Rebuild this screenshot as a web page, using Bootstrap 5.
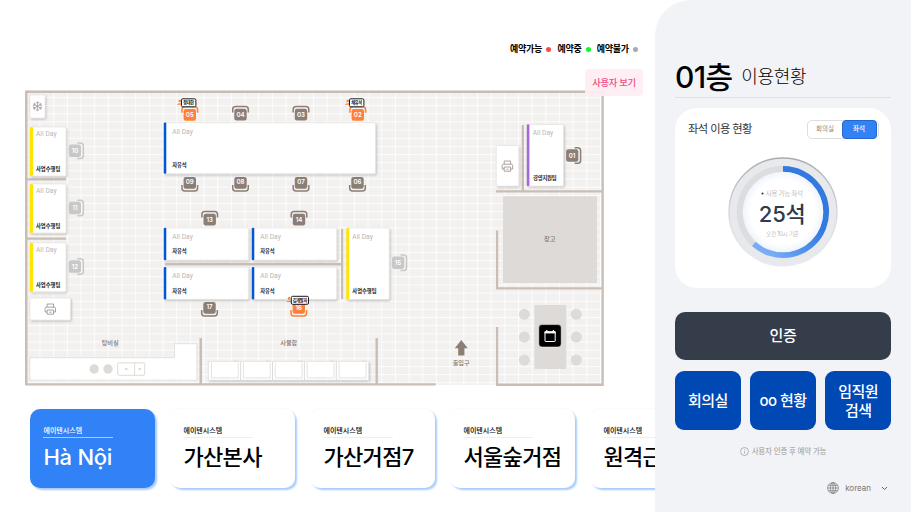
<!DOCTYPE html>
<html lang="ko">
<head>
<meta charset="utf-8">
<meta name="viewport" content="width=device-width, initial-scale=1">
<title>좌석 이용 현황</title>
<link href="https://cdn.jsdelivr.net/npm/bootstrap@5.3.0/dist/css/bootstrap.min.css" rel="stylesheet">
<style>
body{font-family:Inter,"Noto Sans CJK KR",sans-serif;width:911px;height:512px;overflow:hidden;background:#fff;color:#000}
.kiosk{height:512px}
.floor-side{width:655px;padding-top:42px}
.legend{height:14px;font-size:9px;font-weight:700;letter-spacing:-.28px;padding-right:17px;line-height:14px}
.legend-dot{width:5px;height:5px;border-radius:50%;margin:0 6px 0 4.3px}
.legend-dot:last-child{margin-right:0}
.dot-ok{background:#ff4747}.dot-busy{background:#0dfb25}.dot-off{background:#a8a8ae}
.plan-wrap{height:333px}
.user-btn{right:12px;top:13px;width:58px;height:27px;border-radius:4px;background:rgba(255,238,244,.92);color:#ef4c86;font-size:9.3px;font-weight:500;letter-spacing:-.3px;border:0;padding:0}
.branch-strip{padding:20px 0 0 30px;gap:15px;height:123px;overflow:hidden}
.branch{flex:0 0 125px;height:78.5px;border-radius:10px;background:#fff;padding:14.5px 13.4px 0;box-shadow:2px 2px 2px #a9cbff,0 -1px 2px rgba(0,0,0,.025)}
.branch.on{background:#3182f6;color:#fff}
.branch-co{font-size:7px;line-height:13px;letter-spacing:.05px;font-weight:500;white-space:nowrap}
.branch-rule{width:70px;height:1px;background:#eee}
.branch.on .branch-rule{background:#a7cbff}
.branch-name{font-size:22px;line-height:30px;font-weight:500;letter-spacing:-.65px;margin-top:4.5px;white-space:nowrap}
.branch.on .branch-name{letter-spacing:-.25px}
.panel{width:256px;background:#f2f3f6;border-top-left-radius:36px;padding:57px 20px 0}
.floor-head{height:41px;border-bottom:1px solid #dfe0e2;gap:8.5px}
.floor-no{font-size:30px;font-weight:500;letter-spacing:-.6px;line-height:40px}
.floor-sub{font-size:18px;font-weight:300;letter-spacing:-.3px;line-height:40px}
.usage{margin-top:10px;height:180px;border-radius:22px;background:#fff;padding:12px 12.5px 0 13px}
.usage-title{font-size:11.3px;letter-spacing:-.6px;color:#333;line-height:19px}
.switch-box{width:72px;height:19px;border:1px solid #ddd;border-radius:5px;font-size:6.5px;color:#888;line-height:17px;text-align:center}
.switch-box .sel{background:#3182f6;color:#fff;border-radius:4px;margin:-1px;line-height:17px;border:1px solid #2467c9;font-weight:500}
.gauge{display:block;margin:15px 0 0 36.8px;width:116px;height:116px}
.auth{margin-top:24px;height:48px;border-radius:10px;background:#353d4a;color:#fff;font-size:15px;font-weight:500;border:0;padding:0;letter-spacing:-.4px}
.act-row{margin-top:11px;gap:9.5px}
.act{flex:1 1 0;height:59px;border-radius:9px;background:#0049b5;color:#fff;border:0;padding:0;font-size:15px;font-weight:500;line-height:19px;letter-spacing:-.5px}
.hint{margin-top:15px;height:13px;font-size:7.5px;color:#999;letter-spacing:-.2px;gap:3px}
.lang{margin-top:23px;height:14px;font-size:8px;color:#777;gap:6px;padding-right:3px}
.plan text{font-family:Inter,"Noto Sans CJK KR",sans-serif}
.wall{fill:#cabdb5}
.desk{fill:#fff;stroke:#dedbd9;stroke-width:.5;filter:url(#sh)}
.ad{font-size:6.6px;fill:#b6b6b6}
.plan .ad text{font-family:Roboto,sans-serif}
.tm{font-size:5.3px;font-weight:700;fill:#222}
.rm{font-size:6.2px;font-weight:500;fill:#83776f;text-anchor:middle}
.no{font-size:6.2px;font-weight:600;fill:#fff;text-anchor:middle}
.nm{font-size:4.2px;font-weight:700;fill:#111;text-anchor:middle}
.fur{fill:#dedad7}
.used{color:#8b7e76}.busy{color:#ff8136}.off{color:#c9c8c8}
</style>
<script src="https://cdn.jsdelivr.net/npm/bootstrap@5.3.0/dist/js/bootstrap.bundle.min.js"></script>
</head>
<body>
<div class="kiosk d-flex">
<main class="floor-side d-flex flex-column flex-shrink-0 overflow-hidden">
  <div class="legend d-flex justify-content-end align-items-center">
    <span>예약가능</span><i class="legend-dot dot-ok"></i><span>예약중</span><i class="legend-dot dot-busy"></i><span>예약불가</span><i class="legend-dot dot-off"></i>
  </div>
  <div class="plan-wrap position-relative">
  <svg class="plan d-block" width="655" height="333" viewBox="0 56 655 333">
    <defs>
      <pattern id="grid" x="39.5" y="97" width="13.67" height="8.15" patternUnits="userSpaceOnUse"><rect width="13.67" height="8.15" fill="#f2f1f0"/><path d="M.5 0V8.15M0 .5H13.67" stroke="#fff" stroke-width=".75"/></pattern>
      <filter id="sh" x="-20%" y="-20%" width="150%" height="150%"><feDropShadow dx="1" dy="1.3" stdDeviation="1" flood-color="#000" flood-opacity=".22"/></filter>
      <g id="up"><path d="M-7.8-2V-5Q-7.8-8-5-8H5Q7.8-8 7.8-5V-2" fill="none" stroke="currentColor" stroke-width="1.5"/><rect x="-6.2" y="-5.8" width="12.4" height="11.8" rx="2.2" fill="currentColor"/></g>
      <g id="down"><path d="M-7.8 2V5Q-7.8 8-5 8H5Q7.8 8 7.8 5V2" fill="none" stroke="currentColor" stroke-width="1.5"/><rect x="-6.2" y="-6" width="12.4" height="11.8" rx="2.2" fill="currentColor"/></g>
      <g id="right"><path d="M2-7.8H5Q8-7.8 8-5V5Q8 7.8 5 7.8H2" fill="none" stroke="currentColor" stroke-width="1.5"/><rect x="-6.5" y="-6.2" width="12.2" height="12.4" rx="2.2" fill="currentColor"/></g>
      <g id="person" fill="#ff8136"><circle cx="-8.9" cy="-1.8" r="1.3"/><path d="M-11.8 1.9Q-8.9-1-6 1.9Z"/></g>
      <g id="tag"><use href="#person"/><rect x="-7.2" y="-4" width="14.4" height="8" rx="1.3" fill="#fff" stroke="#171b22" stroke-width="1"/></g>
      <g id="printer" fill="none" stroke="#968b85" stroke-width=".8" stroke-linejoin="round"><path d="M-3.2-1.8V-5H3.2V-1.8M-3.2 3H-5.2V-.4Q-5.2-1.8-3.8-1.8H3.8Q5.2-1.8 5.2-.4V3H3.2M-3.2 1H3.2V5.2H-3.2ZM-1 3.2H1"/></g>
    </defs>
    <rect x="25" y="90.5" width="578.5" height="294.5" fill="url(#grid)"/>
    <g class="wall">
      <path d="M25 90.5H603.8V386H496V327H498.2V383.4H601.5V289.6H496V230.5H498.2V287.2H601.5V192.6H496V190.2H521.7V125H524V190.2H601.5V93H27.5V178.2H66V180.4H27.5V237.4H66V239.8H27.5V383.2H199.5V338H202V383.2H375.5V338H377.9V383.2H435.7V385.5H25Z"/>
      <path d="M165 263H341V229H343.2V299H341V265.4H165Z"/>
    </g>
    <g class="desk">
      <rect x="30" y="95" width="15" height="23" rx="1"/><rect x="30" y="298" width="40.5" height="22" rx="1"/><rect x="496.3" y="145.5" width="22.5" height="40.5" rx="1"/>
      <rect x="30" y="127" width="36" height="49" rx="1.5"/><rect x="30" y="184" width="36" height="49" rx="1.5"/><rect x="30" y="242.8" width="36" height="49" rx="1.5"/>
      <rect x="164" y="122.7" width="211.5" height="51" rx="1.5"/>
      <rect x="164" y="228" width="84.7" height="32" rx="1.2"/><rect x="252" y="228" width="84.7" height="32" rx="1.2"/><rect x="164" y="267.3" width="84.7" height="32" rx="1.2"/><rect x="252" y="267.3" width="84.7" height="32" rx="1.2"/>
      <rect x="346.5" y="228" width="42.7" height="71.5" rx="1.5"/><rect x="527" y="124.5" width="36.5" height="61.5" rx="1.5"/>
    </g>
    <g fill="#ffe500"><rect x="30" y="127" width="3" height="49" rx="1.3"/><rect x="30" y="184" width="3" height="49" rx="1.3"/><rect x="30" y="242.8" width="3" height="49" rx="1.3"/><rect x="346.3" y="228" width="3" height="71.5" rx="1.3"/></g>
    <g fill="#0058d6"><rect x="163.8" y="122.5" width="2.5" height="51.3" rx="1"/><rect x="163.8" y="227.8" width="2.5" height="32.4" rx="1"/><rect x="251.8" y="227.8" width="2.5" height="32.4" rx="1"/><rect x="163.8" y="267" width="2.5" height="32.6" rx="1"/><rect x="251.8" y="267" width="2.5" height="32.6" rx="1"/></g>
    <rect x="526.8" y="124.3" width="2.6" height="61.9" rx="1.2" fill="#a567dc"/>
    <g class="ad">
      <text x="36" y="136" textLength="20.5">All Day</text><text x="36" y="193" textLength="20.5">All Day</text><text x="36" y="251.6" textLength="20.5">All Day</text>
      <text x="172.3" y="133.7" textLength="20.5">All Day</text><text x="172.3" y="239" textLength="20.5">All Day</text><text x="260.3" y="239" textLength="20.5">All Day</text><text x="172.3" y="278.4" textLength="20.5">All Day</text><text x="260.3" y="278.4" textLength="20.5">All Day</text><text x="352.3" y="239" textLength="20.5">All Day</text><text x="532.7" y="135.3" textLength="20.5">All Day</text>
    </g>
    <g class="tm">
      <text x="36" y="170.6" textLength="24.3">사업수행팀</text><text x="36" y="227.7" textLength="24.3">사업수행팀</text><text x="36" y="286.5" textLength="24.3">사업수행팀</text><text x="352.3" y="292.8" textLength="24.3">사업수행팀</text><text x="533" y="179.8" textLength="23.7">경영지원팀</text>
      <text x="172.3" y="167.2" textLength="14.3">자유석</text><text x="172.3" y="253.4" textLength="14.3">자유석</text><text x="260.3" y="253.4" textLength="14.3">자유석</text><text x="172.3" y="292.8" textLength="14.3">자유석</text><text x="260.3" y="292.8" textLength="14.3">자유석</text>
    </g>
    <g class="used">
      <use href="#up" x="240.5" y="114.5"/><use href="#up" x="301" y="114.5"/><use href="#up" x="209.7" y="219.5"/><use href="#up" x="299" y="219.5"/>
      <use href="#down" x="189.8" y="183"/><use href="#down" x="240.5" y="183"/><use href="#down" x="301" y="183"/><use href="#down" x="357.5" y="183"/><use href="#down" x="209.5" y="308"/><use href="#right" x="572.6" y="155.5"/>
    </g>
    <g class="busy"><use href="#up" x="189.8" y="114.8"/><use href="#up" x="357.8" y="114.8"/><use href="#down" x="298.8" y="308"/></g>
    <g class="off"><use href="#right" x="75.3" y="150.7"/><use href="#right" x="75.3" y="208"/><use href="#right" x="75.3" y="266.5"/><use href="#right" x="398.5" y="262.7"/></g>
    <g class="no">
      <text x="189.8" y="117.1">05</text><text x="240.5" y="116.9">04</text><text x="301" y="116.9">03</text><text x="357.8" y="117.1">02</text>
      <text x="189.8" y="184.4">09</text><text x="240.5" y="184.4">08</text><text x="301" y="184.4">07</text><text x="357.5" y="184.4">06</text>
      <text x="209.7" y="222">13</text><text x="299" y="222">14</text><text x="209.5" y="309.4">17</text><text x="298.8" y="309.6">16</text>
      <text x="75" y="152.9">10</text><text x="75" y="210.2">11</text><text x="75" y="268.7">12</text><text x="398" y="264.8">15</text><text x="572" y="157.7">01</text>
    </g>
    <use href="#tag" x="188.7" y="102.8"/><use href="#tag" x="356.7" y="102.8"/><use href="#person" x="298" y="300.2"/>
    <rect x="291.3" y="296.3" width="17.2" height="8" rx="1.3" fill="#fff" stroke="#171b22"/>
    <g class="nm"><text x="188.7" y="104.4" textLength="11">장대한</text><text x="356.7" y="104.4" textLength="11">채유석</text><text x="300" y="301.9" textLength="14.5">김개발자</text></g>
    <g transform="translate(37.4 106.3)" fill="none" stroke="#a29b96" stroke-width=".8"><g id="arm"><path d="M0-4.8V4.8M-1.6-4.3L0-2.8L1.6-4.3M-1.6 4.3L0 2.8L1.6 4.3"/></g><use href="#arm" transform="rotate(60)"/><use href="#arm" transform="rotate(120)"/></g>
    <use href="#printer" x="50.3" y="309"/><use href="#printer" x="507.4" y="166"/>
    <path d="M29.8 357.7H174.5V343.7H196.8V380.2H29.8Z" fill="#fff" stroke="#dedad8" stroke-width=".8"/>
    <circle class="fur" cx="94.2" cy="369" r="4.7"/><circle class="fur" cx="108" cy="369" r="4.7"/>
    <g fill="#fff" stroke="#dedad8"><rect x="117.7" y="362.8" width="27" height="12.5" rx="1.5"/><path d="M134.6 363V375"/></g>
    <circle class="fur" cx="126.2" cy="369" r="1.3"/><circle class="fur" cx="139.8" cy="369" r="1.3"/>
    <rect class="desk" x="208.7" y="361.5" width="160" height="18.5"/>
    <g fill="none" stroke="#d5d2cf" stroke-width=".8"><path d="M240.6 361.5V380M272.5 361.5V380M304.4 361.5V380M336.3 361.5V380"/><path stroke-width=".6" d="M211.5 362.5V377.8H238.3V362.5M243.4 362.5V377.8H270.2V362.5M275.3 362.5V377.8H302V362.5M307.2 362.5V377.8H334V362.5M339.1 362.5V377.8H366V362.5M233.5 361H238M265.5 361H270M297.5 361H302M329.5 361H334M361.5 361H366"/></g>
    <path d="M461.3 340L467.8 348.2H464.4V355.5H458.2V348.2H454.8Z" fill="#8b7e76"/>
    <rect class="fur" x="503" y="196.3" width="94" height="86.7" rx="1"/><rect class="fur" x="534.3" y="305" width="32" height="64" rx="1"/>
    <g class="fur"><circle cx="524.3" cy="314.3" r="5.5"/><circle cx="524.3" cy="337" r="5.5"/><circle cx="524.3" cy="360" r="5.5"/><circle cx="576.3" cy="314.3" r="5.5"/><circle cx="576.3" cy="337" r="5.5"/><circle cx="576.3" cy="360" r="5.5"/></g>
    <rect x="538.8" y="324.6" width="22.4" height="22.4" rx="3.2" fill="#000" stroke="#fff" stroke-width=".5"/>
    <g fill="none" stroke="#fff"><rect x="545" y="331.8" width="10.2" height="9.7" rx=".5"/><path d="M544.5 332.4H555.7" stroke-width="2"/><path d="M546.8 330V332M553.4 330V332" stroke-width="1.2"/></g>
    <g class="rm"><text x="110.2" y="344.5" textLength="17">탕비실</text><text x="288.8" y="344.5" textLength="17">사물함</text><text x="461.2" y="365.3" textLength="17">출입구</text><text x="549.8" y="240.7" textLength="11.5">창고</text></g>
  </svg>
  <button class="user-btn position-absolute">사용자 보기</button>
  </div>
  <div class="branch-strip d-flex">
    <div class="branch on"><div class="branch-co">에이텐시스템</div><div class="branch-rule"></div><div class="branch-name">Hà Nội</div></div>
    <div class="branch"><div class="branch-co">에이텐시스템</div><div class="branch-rule"></div><div class="branch-name">가산본사</div></div>
    <div class="branch"><div class="branch-co">에이텐시스템</div><div class="branch-rule"></div><div class="branch-name">가산거점7</div></div>
    <div class="branch"><div class="branch-co">에이텐시스템</div><div class="branch-rule"></div><div class="branch-name">서울숲거점</div></div>
    <div class="branch"><div class="branch-co">에이텐시스템</div><div class="branch-rule"></div><div class="branch-name">원격근무</div></div>
  </div>
</main>
<aside class="panel d-flex flex-column flex-shrink-0">
  <div class="floor-head d-flex align-items-center"><span class="floor-no">01층</span><span class="floor-sub">이용현황</span></div>
  <section class="usage">
    <div class="d-flex justify-content-between align-items-center"><span class="usage-title">좌석 이용 현황</span>
      <div class="switch-box d-flex"><span class="w-50">회의실</span><span class="w-50 sel">좌석</span></div></div>
    <svg class="gauge" viewBox="-58 -58 116 116">
      <defs><linearGradient id="arc" gradientUnits="userSpaceOnUse" x1="40" y1="5" x2="-20" y2="40" gradientTransform="rotate(90)"><stop stop-color="#73a9f3"/><stop offset="1" stop-color="#3279e0"/></linearGradient>
      <linearGradient id="rim" x1="0" y1="0" x2="0" y2="1"><stop stop-color="#a9abb3"/><stop offset=".6" stop-color="#dcdde1"/><stop offset="1" stop-color="#ebecee"/></linearGradient>
      <radialGradient id="face"><stop offset=".8" stop-color="#fff"/><stop offset="1" stop-color="#eff4fc"/></radialGradient></defs>
      <circle r="54" fill="#e8e9ec" stroke="url(#rim)" stroke-width="1.3"/>
      <circle r="46.3" fill="#dcdddf"/>
      <path d="M0-43A43 43 0 1 1-29 31.7" fill="none" stroke="url(#arcfill)" stroke-width="6"/>
      <linearGradient id="arcfill" gradientUnits="userSpaceOnUse" x1="35" y1="12" x2="-12" y2="42"><stop stop-color="#3279e0"/><stop offset="1" stop-color="#78adf5"/></linearGradient>
      <circle r="40.3" fill="url(#face)"/>
      <circle cx="-20.5" cy="-18.5" r="1.1" fill="#303a4b"/>
      <g text-anchor="middle" font-weight="300" fill="#999"><text x="1.3" y="-16.2" font-size="6.8" textLength="37.5">사용 가능 좌석</text><text x="-.5" y="24.2" font-size="5.6" textLength="33">오전 10시 기준</text></g>
      <text x="-.7" y="9.6" font-size="22" font-weight="500" fill="#303a4b" text-anchor="middle" textLength="47">25석</text>
    </svg>
  </section>
  <button class="auth w-100">인증</button>
  <div class="act-row d-flex"><button class="act">회의실</button><button class="act">oo 현황</button><button class="act">임직원<br>검색</button></div>
  <div class="hint d-flex justify-content-center align-items-center"><svg width="9" height="9" viewBox="0 0 9 9" fill="none" stroke="#999" stroke-width=".7"><circle cx="4.5" cy="4.5" r="4"/><path d="M4.5 4V6.6M4.5 2.2V3"/></svg><span>사용자 인증 후 예약 가능</span></div>
  <div class="lang d-flex justify-content-end align-items-center"><svg width="12" height="12" viewBox="0 0 12 12" fill="none" stroke="#777" stroke-width=".7"><circle cx="6" cy="6" r="5.4"/><ellipse cx="6" cy="6" rx="2.6" ry="5.4"/><path d="M.6 6H11.4M6 .6V11.4M1.4 3.3H10.6M1.4 8.7H10.6"/></svg><span>korean</span><svg class="ms-1" width="7" height="5" viewBox="0 0 7 5" fill="none" stroke="#666"><path d="M1 1L3.5 3.5L6 1"/></svg></div>
</aside>
</div>
</body>
</html>
